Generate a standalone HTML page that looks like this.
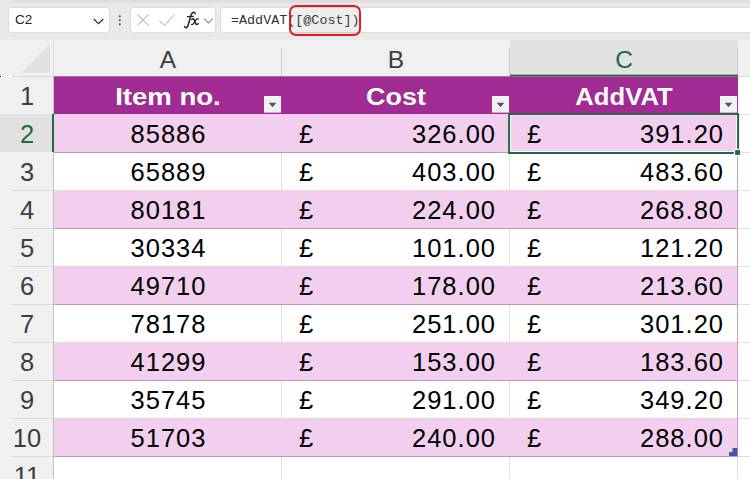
<!DOCTYPE html>
<html><head><meta charset="utf-8"><title>Sheet</title>
<style>
*{box-sizing:border-box;margin:0;padding:0}
html,body{width:750px;height:479px;overflow:hidden;background:#fff;font-family:"Liberation Sans",sans-serif;}
#root{position:relative;width:750px;height:479px;overflow:hidden;background:#fff}
.abs{position:absolute}
.box{position:absolute;background:#fff;border:1px solid #dedcdc;border-radius:4px;top:7px;height:26px}
.ch{position:absolute;top:40px;height:36px;font-size:24.5px;color:#3d3d3d;text-align:center;line-height:39px}
.rh{position:absolute;left:0;width:54px;height:38px;font-size:25.5px;color:#3d3d3d;text-align:center;line-height:40px;}
.cell{position:absolute;font-size:25.5px;letter-spacing:1px;color:#000;line-height:41px;height:38px;white-space:nowrap}
.hd{position:absolute;color:#fff;font-weight:bold;font-size:24.5px;line-height:41px;height:38px;text-align:center;white-space:nowrap}
.fb{position:absolute;width:17px;height:17px;background:#f2f2f6;border:1px solid #fafafc;}
.fb:after{content:"";position:absolute;left:4px;top:6px;border-left:3.6px solid transparent;border-right:3.6px solid transparent;border-top:4px solid #555}
.hl{position:absolute;height:1px}
.vl{position:absolute;width:1px}
</style></head><body><div id="root">
<div class="abs" style="left:0;top:0;width:750px;height:40px;background:#eae9ea"></div>
<div class="abs" style="left:10px;top:-6px;width:760px;height:9px;border-radius:0 0 0 7px;background:linear-gradient(#d6d4d6,#e1dfe1)"></div>
<div class="box" style="left:8px;width:102px"></div>
<div class="box" style="left:130px;width:86px"></div>
<div class="box" style="left:220px;width:540px"></div>
<div class="abs" style="left:15px;top:7px;height:26px;line-height:26.5px;font-size:13.5px;color:#222">C2</div>
<svg class="abs" style="left:0;top:0" width="750" height="40" viewBox="0 0 750 40"><path d="M93.8 19 L98.5 23.6 L103.2 19" fill="none" stroke="#333" stroke-width="1.3"/><circle cx="119.8" cy="16.2" r="1" fill="#444"/><circle cx="119.8" cy="20.2" r="1" fill="#444"/><circle cx="119.8" cy="24.2" r="1" fill="#444"/><path d="M137.5 14.5 L148.5 25.3 M148.5 14.5 L137.5 25.3" fill="none" stroke="#bdbdbd" stroke-width="1.1"/><path d="M159.3 20.6 L164.6 25.3 L174.5 14.5" fill="none" stroke="#bdbdbd" stroke-width="1.1"/><path d="M204 18.6 L208.4 23 L212.8 18.6" fill="none" stroke="#8c8c8c" stroke-width="1.1"/></svg>
<svg class="abs" style="left:178px;top:6px" width="26" height="26" viewBox="178 6 26 26"><path d="M195.2 13.7 C194.9 12.4 193.6 11.9 192.6 12.6 C191.3 13.5 190.9 15.2 190.5 17 L188.3 24.5 C187.8 26.3 187.2 27.8 185.9 27.7 C185.2 27.6 184.7 27.2 184.5 26.6" fill="none" stroke="#222" stroke-width="1.5" stroke-linecap="round"/><path d="M187.4 16.7 L193.5 16.3" fill="none" stroke="#222" stroke-width="1.2" stroke-linecap="round"/><path d="M191.8 19.4 C192.6 18.3 193.6 18.4 194.1 19.7 L195.6 23.6 C196.1 24.9 197.2 24.9 198.2 23.6" fill="none" stroke="#222" stroke-width="1.5" stroke-linecap="round"/><path d="M198.3 19 C197.5 18.4 196.6 19 195.9 20 L193.6 23.4 C192.9 24.5 192.2 25 191.5 24.4" fill="none" stroke="#222" stroke-width="1.2" stroke-linecap="round"/></svg>
<div class="abs" style="left:231px;top:7px;height:26px;line-height:27px;font-size:13.4px;color:#303030;font-family:'Liberation Mono',monospace;white-space:nowrap">=AddVAT([@Cost])</div>
<div class="abs" style="left:289px;top:5px;width:72px;height:31px;border:2px solid #e01c1c;border-radius:7px;background:rgba(120,120,120,0.13)"></div>
<div class="abs" style="left:0;top:40px;width:750px;height:36px;background:#f0f0f0"></div>
<div class="abs" style="left:510px;top:40px;width:228px;height:36px;background:#e1e2e1"></div>
<svg class="abs" style="left:0;top:40px" width="54" height="37"><path d="M50 3.8 L50 32.7 L21.6 32.7 Z" fill="#e2e2e2"/></svg>
<div class="ch" style="left:54px;width:228px;color:#3d3d3d">A</div>
<div class="ch" style="left:282px;width:228px;color:#3d3d3d">B</div>
<div class="ch" style="left:510px;width:228px;color:#1e6b41">C</div>
<div class="vl" style="left:281px;top:48px;height:28px;background:#cdcdcd"></div>
<div class="vl" style="left:509px;top:48px;height:28px;background:#cdcdcd"></div>
<div class="vl" style="left:737px;top:48px;height:28px;background:#cdcdcd"></div>
<div class="vl" style="left:53px;top:40px;height:36px;background:#e0e0e0"></div>
<div class="hl" style="left:12px;top:76px;width:42px;background:#d8d8d8"></div>
<div class="hl" style="left:738px;top:76px;width:12px;background:#dcdcdc"></div>
<div class="abs" style="left:0;top:76px;width:1px;height:1px;background:#111"></div>
<div class="abs" style="left:0;top:77px;width:54px;height:402px;background:#f0f0f0"></div>
<div class="abs" style="left:0;top:114px;width:54px;height:38px;background:#e1e1e1"></div>
<div class="rh" style="top:76px;color:#3d3d3d">1</div>
<div class="rh" style="top:114px;color:#1e6b41">2</div>
<div class="rh" style="top:152px;color:#3d3d3d">3</div>
<div class="hl" style="left:12px;top:190px;width:42px;background:#dadada"></div>
<div class="rh" style="top:190px;color:#3d3d3d">4</div>
<div class="hl" style="left:12px;top:228px;width:42px;background:#dadada"></div>
<div class="rh" style="top:228px;color:#3d3d3d">5</div>
<div class="hl" style="left:12px;top:266px;width:42px;background:#dadada"></div>
<div class="rh" style="top:266px;color:#3d3d3d">6</div>
<div class="hl" style="left:12px;top:304px;width:42px;background:#dadada"></div>
<div class="rh" style="top:304px;color:#3d3d3d">7</div>
<div class="hl" style="left:12px;top:342px;width:42px;background:#dadada"></div>
<div class="rh" style="top:342px;color:#3d3d3d">8</div>
<div class="hl" style="left:12px;top:380px;width:42px;background:#dadada"></div>
<div class="rh" style="top:380px;color:#3d3d3d">9</div>
<div class="hl" style="left:12px;top:418px;width:42px;background:#dadada"></div>
<div class="rh" style="top:418px;color:#3d3d3d">10</div>
<div class="hl" style="left:12px;top:456px;width:42px;background:#dadada"></div>
<div class="rh" style="top:456px;color:#3d3d3d">11</div>
<div class="hl" style="left:12px;top:494px;width:42px;background:#dadada"></div>
<div class="vl" style="left:53px;top:77px;height:402px;background:#c2c2c2"></div>
<div class="abs" style="left:52px;top:114px;width:2px;height:38px;background:#1e6b41"></div>
<div class="abs" style="left:54px;top:76px;width:684px;height:38px;background:#a02b93"></div>
<div class="hl" style="left:54px;top:76px;width:684px;background:#b565ab"></div>
<div class="hd" style="left:54px;top:76px;width:228px;transform:scaleX(1.124)">Item no.</div>
<svg class="abs" style="left:264px;top:96px" width="17" height="17" viewBox="0 0 17 17"><rect x="0" y="0" width="17" height="16.6" fill="#fafafc"/><rect x="1" y="1" width="15" height="14.6" fill="#f1f1f5"/><path d="M4.7 6.8 H12.3 L8.5 11.3 Z" fill="#555"/></svg>
<div class="hd" style="left:282px;top:76px;width:228px;transform:scaleX(1.099)">Cost</div>
<svg class="abs" style="left:492px;top:96px" width="17" height="17" viewBox="0 0 17 17"><rect x="0" y="0" width="17" height="16.6" fill="#fafafc"/><rect x="1" y="1" width="15" height="14.6" fill="#f1f1f5"/><path d="M4.7 6.8 H12.3 L8.5 11.3 Z" fill="#555"/></svg>
<div class="hd" style="left:510px;top:76px;width:228px;transform:scaleX(1.048)">AddVAT</div>
<svg class="abs" style="left:720px;top:96px" width="17" height="17" viewBox="0 0 17 17"><rect x="0" y="0" width="17" height="16.6" fill="#fafafc"/><rect x="1" y="1" width="15" height="14.6" fill="#f1f1f5"/><path d="M4.7 6.8 H12.3 L8.5 11.3 Z" fill="#555"/></svg>
<div class="abs" style="left:54px;top:114px;width:684px;height:38px;background:#f2cfee"></div>
<div class="hl" style="left:54px;top:152px;width:684px;background:#cc8fca"></div>
<div class="cell" style="left:54px;top:114px;width:229px;text-align:center">85886</div>
<div class="cell" style="left:299px;top:114px">£</div>
<div class="cell" style="left:282px;top:114px;width:214px;text-align:right">326.00</div>
<div class="cell" style="left:527px;top:114px">£</div>
<div class="cell" style="left:510px;top:114px;width:214px;text-align:right">391.20</div>
<div class="hl" style="left:54px;top:190px;width:684px;background:#cc8fca"></div>
<div class="cell" style="left:54px;top:152px;width:229px;text-align:center">65889</div>
<div class="cell" style="left:299px;top:152px">£</div>
<div class="cell" style="left:282px;top:152px;width:214px;text-align:right">403.00</div>
<div class="cell" style="left:527px;top:152px">£</div>
<div class="cell" style="left:510px;top:152px;width:214px;text-align:right">483.60</div>
<div class="abs" style="left:54px;top:190px;width:684px;height:38px;background:#f2cfee"></div>
<div class="hl" style="left:54px;top:228px;width:684px;background:#cc8fca"></div>
<div class="cell" style="left:54px;top:190px;width:229px;text-align:center">80181</div>
<div class="cell" style="left:299px;top:190px">£</div>
<div class="cell" style="left:282px;top:190px;width:214px;text-align:right">224.00</div>
<div class="cell" style="left:527px;top:190px">£</div>
<div class="cell" style="left:510px;top:190px;width:214px;text-align:right">268.80</div>
<div class="hl" style="left:54px;top:266px;width:684px;background:#cc8fca"></div>
<div class="cell" style="left:54px;top:228px;width:229px;text-align:center">30334</div>
<div class="cell" style="left:299px;top:228px">£</div>
<div class="cell" style="left:282px;top:228px;width:214px;text-align:right">101.00</div>
<div class="cell" style="left:527px;top:228px">£</div>
<div class="cell" style="left:510px;top:228px;width:214px;text-align:right">121.20</div>
<div class="abs" style="left:54px;top:266px;width:684px;height:38px;background:#f2cfee"></div>
<div class="hl" style="left:54px;top:304px;width:684px;background:#cc8fca"></div>
<div class="cell" style="left:54px;top:266px;width:229px;text-align:center">49710</div>
<div class="cell" style="left:299px;top:266px">£</div>
<div class="cell" style="left:282px;top:266px;width:214px;text-align:right">178.00</div>
<div class="cell" style="left:527px;top:266px">£</div>
<div class="cell" style="left:510px;top:266px;width:214px;text-align:right">213.60</div>
<div class="hl" style="left:54px;top:342px;width:684px;background:#cc8fca"></div>
<div class="cell" style="left:54px;top:304px;width:229px;text-align:center">78178</div>
<div class="cell" style="left:299px;top:304px">£</div>
<div class="cell" style="left:282px;top:304px;width:214px;text-align:right">251.00</div>
<div class="cell" style="left:527px;top:304px">£</div>
<div class="cell" style="left:510px;top:304px;width:214px;text-align:right">301.20</div>
<div class="abs" style="left:54px;top:342px;width:684px;height:38px;background:#f2cfee"></div>
<div class="hl" style="left:54px;top:380px;width:684px;background:#cc8fca"></div>
<div class="cell" style="left:54px;top:342px;width:229px;text-align:center">41299</div>
<div class="cell" style="left:299px;top:342px">£</div>
<div class="cell" style="left:282px;top:342px;width:214px;text-align:right">153.00</div>
<div class="cell" style="left:527px;top:342px">£</div>
<div class="cell" style="left:510px;top:342px;width:214px;text-align:right">183.60</div>
<div class="hl" style="left:54px;top:418px;width:684px;background:#cc8fca"></div>
<div class="cell" style="left:54px;top:380px;width:229px;text-align:center">35745</div>
<div class="cell" style="left:299px;top:380px">£</div>
<div class="cell" style="left:282px;top:380px;width:214px;text-align:right">291.00</div>
<div class="cell" style="left:527px;top:380px">£</div>
<div class="cell" style="left:510px;top:380px;width:214px;text-align:right">349.20</div>
<div class="abs" style="left:54px;top:418px;width:684px;height:38px;background:#f2cfee"></div>
<div class="hl" style="left:54px;top:456px;width:684px;background:#cc8fca"></div>
<div class="cell" style="left:54px;top:418px;width:229px;text-align:center">51703</div>
<div class="cell" style="left:299px;top:418px">£</div>
<div class="cell" style="left:282px;top:418px;width:214px;text-align:right">240.00</div>
<div class="cell" style="left:527px;top:418px">£</div>
<div class="cell" style="left:510px;top:418px;width:214px;text-align:right">288.00</div>
<div class="hl" style="left:54px;top:114px;width:456px;background:#f9c9f7"></div>
<div class="vl" style="left:281px;top:153px;height:37px;background:#e1e1e1"></div>
<div class="vl" style="left:509px;top:153px;height:37px;background:#e1e1e1"></div>
<div class="vl" style="left:281px;top:229px;height:37px;background:#e1e1e1"></div>
<div class="vl" style="left:509px;top:229px;height:37px;background:#e1e1e1"></div>
<div class="vl" style="left:281px;top:305px;height:37px;background:#e1e1e1"></div>
<div class="vl" style="left:509px;top:305px;height:37px;background:#e1e1e1"></div>
<div class="vl" style="left:281px;top:381px;height:37px;background:#e1e1e1"></div>
<div class="vl" style="left:509px;top:381px;height:37px;background:#e1e1e1"></div>
<div class="vl" style="left:281px;top:457px;height:37px;background:#e1e1e1"></div>
<div class="vl" style="left:509px;top:457px;height:37px;background:#e1e1e1"></div>
<div class="vl" style="left:737px;top:153px;height:304px;background:#cf99cd"></div>
<div class="vl" style="left:737px;top:457px;height:22px;background:#dcdcdc"></div>
<div class="hl" style="left:738px;top:114px;width:12px;background:#e1e1e1"></div>
<div class="hl" style="left:738px;top:152px;width:12px;background:#e1e1e1"></div>
<div class="hl" style="left:738px;top:190px;width:12px;background:#e1e1e1"></div>
<div class="hl" style="left:738px;top:228px;width:12px;background:#e1e1e1"></div>
<div class="hl" style="left:738px;top:266px;width:12px;background:#e1e1e1"></div>
<div class="hl" style="left:738px;top:304px;width:12px;background:#e1e1e1"></div>
<div class="hl" style="left:738px;top:342px;width:12px;background:#e1e1e1"></div>
<div class="hl" style="left:738px;top:380px;width:12px;background:#e1e1e1"></div>
<div class="hl" style="left:738px;top:418px;width:12px;background:#e1e1e1"></div>
<div class="hl" style="left:738px;top:456px;width:12px;background:#e1e1e1"></div>
<svg class="abs" style="left:500px;top:70px" width="250" height="90" viewBox="500 70 250 90"><rect x="510.5" y="115.5" width="226.1" height="36" fill="none" stroke="#fff" stroke-opacity="0.8" stroke-width="1"/><rect x="510" y="74.6" width="228" height="1.6" fill="#1e6b41"/><rect x="508.1" y="113.4" width="231" height="1.7" fill="#1e6b41"/><rect x="508.1" y="113.4" width="1.9" height="40.6" fill="#1e6b41"/><rect x="737.1" y="113.4" width="2" height="35.4" fill="#1e6b41"/><rect x="508.1" y="152" width="225.6" height="2" fill="#1e6b41"/><rect x="734" y="149" width="7" height="7" fill="#fff"/><rect x="735.1" y="150.1" width="4.9" height="4.8" fill="#1e6b41"/></svg>
<svg class="abs" style="left:725px;top:445px" width="14" height="13" viewBox="725 445 14 13"><path d="M732.5 448.1 H737.4 V456 H729 V452 H732.5 Z" fill="#4455b0"/></svg>
</div></body></html>
